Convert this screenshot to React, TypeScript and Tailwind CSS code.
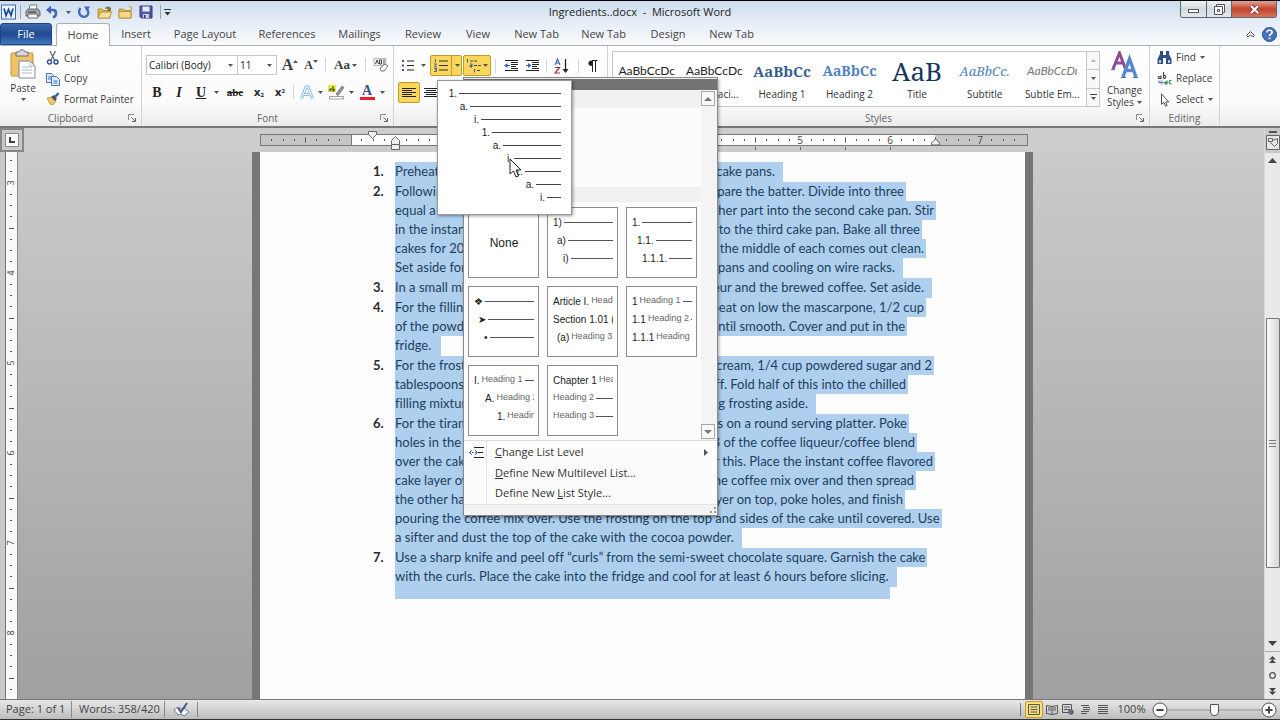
import type { ReactNode } from "react";

function Caret({ className = "" }: { className?: string }) {
  return (
    <svg className={`h-[3px] w-[5px] shrink-0 ${className}`} viewBox="0 0 5 3" fill="#555">
      <path d="M0 0h5L2.5 3z" />
    </svg>
  );
}

function Launcher() {
  return (
    <svg className="h-2 w-2" viewBox="0 0 8 8" fill="none" stroke="#8a8a8a">
      <path d="M.5 6V.5H6" />
      <path d="M3.5 3.5L7 7M7.5 4v3.5H4" stroke="#666" />
    </svg>
  );
}

/* ---------- title bar ---------- */

function Folder({ open }: { open?: boolean }) {
  return (
    <svg className="h-[15px] w-[16px]" viewBox="0 0 16 15">
      <path d="M1 13V4h4l1.5 1.500H13V13z" fill="#e3b64c" stroke="#a57d25" strokeWidth=".7" />
      {open ? (
        <>
          <path d="M1 13l3-6h11l-3 6z" fill="#fbe29a" stroke="#a57d25" strokeWidth=".7" />
          <path d="M8 4c1-3 4-3 5-1l1-1v4h-4l1.200-1.200C10.500 3.500 9 3.500 8 4z" fill="#6b7d36" />
        </>
      ) : (
        <path d="M1 13V6.500h12V13zM11 1l3 1.500-1 3" fill="#f8d888" stroke="#a57d25" strokeWidth=".7" />
      )}
    </svg>
  );
}

function TitleBar() {
  return (
    <header className="relative flex h-[23px] items-center justify-between border-t border-black">
      <div className="flex items-center pl-px">
        <svg className="h-4 w-[15px]" viewBox="0 0 15 16">
          <rect x=".5" y="1" width="14" height="14" fill="#eef5fc" stroke="#3a6fae" />
          <path d="M3 4.500l2 7 2.500-6 2.500 6 2-7" fill="none" stroke="#1d5298" strokeWidth="1.800" />
        </svg>
        <span className="mx-[4px] h-[14px] w-px bg-[#98a5b4]" />
        <button aria-label="Print" className="w-5">
          <svg className="h-4 w-4" viewBox="0 0 16 16">
            <path d="M4 6l1-5h7l-1 5" fill="#fff" stroke="#666" strokeWidth=".8" />
            <path d="M1 7l2-2h10l2 2v5H1z" fill="#a3a6aa" stroke="#50555c" strokeWidth=".8" />
            <path d="M3 10h9l1 4H3z" fill="#f5f5f5" stroke="#555" strokeWidth=".8" />
            <path d="M3 8h8" stroke="#333" />
          </svg>
        </button>
        <button aria-label="Undo" className="w-[19px]">
          <svg className="h-[14px] w-[14px]" viewBox="0 0 14 14" fill="none">
            <path d="M3 5h5c4 0 4 6 0 7.500" stroke="#3e63b8" strokeWidth="2.500" />
            <path d="M1 5l5-4.500V9z" fill="#3e63b8" />
          </svg>
        </button>
        <Caret className="ml-[2px] mr-[6px]" />
        <button aria-label="Repeat" className="w-5">
          <svg className="h-[14px] w-[14px]" viewBox="0 0 14 14" fill="none">
            <path d="M3.500 3C1 6 2 11.500 6.500 11.800 11 12 12.500 8 10.500 4.500" stroke="#3e6cc4" strokeWidth="2.300" />
            <path d="M7 1.500h6l-3 5z" fill="#3e6cc4" />
          </svg>
        </button>
        <button aria-label="Open" className="w-[21px]"><Folder open /></button>
        <button aria-label="New folder" className="w-[21px]"><Folder /></button>
        <button aria-label="Save" className="w-[18px]">
          <svg className="h-[14px] w-[14px]" viewBox="0 0 14 14">
            <path d="M1 1h12v12H2.500L1 11.500z" fill="#5557a8" stroke="#34367c" />
            <path d="M3.500 1.500h7v5h-7z" fill="#e8ebf7" />
            <path d="M4 9h6v4H4z" fill="#c9cce4" />
            <path d="M5 10h1.500v3H5z" fill="#34367c" />
          </svg>
        </button>
        <span className="mx-[3px] h-[14px] w-px bg-[#98a5b4]" />
        <svg className="h-2 w-[7px]" viewBox="0 0 7 8" fill="#333">
          <path d="M0 1h7v1H0zM.500 4h6l-3 3.500z" />
        </svg>
      </div>
      <h1 className="absolute inset-x-0 text-center text-[11px] text-[#222] pointer-events-none">
        Ingredients..docx&nbsp; - &nbsp;Microsoft Word
      </h1>
      <div className="mr-[3px] flex h-[17px] self-start overflow-hidden rounded-b-[3px] border border-t-0 border-[#5d6670]">
        <button aria-label="Minimize" className="flex w-[26px] items-end justify-center border-r border-[#5d6670] bg-linear-to-b from-[#f0f2f4] via-[#d3d8dd] via-50% to-[#e6eaee] pb-1">
          <svg className="h-[4px] w-[11px]" viewBox="0 0 11 4"><rect x=".5" y=".5" width="10" height="3" fill="#fff" stroke="#555" /></svg>
        </button>
        <button aria-label="Restore" className="flex w-[25px] items-center justify-center border-r border-[#5d6670] bg-linear-to-b from-[#f0f2f4] via-[#d3d8dd] via-50% to-[#e6eaee]">
          <svg className="h-[11px] w-[11px]" viewBox="0 0 11 11" fill="#fff" stroke="#555">
            <path d="M2.500.5h8v8h-8z" /><path d="M.5 2.500h8v8h-8z" /><path d="M3.500 5.500h2v2h-2z" />
          </svg>
        </button>
        <button aria-label="Close" className="flex w-[44px] items-center justify-center bg-linear-to-b from-[#e3a196] via-[#c0432c] via-50% to-[#d9745c]">
          <svg className="h-[9px] w-[11px]" viewBox="0 0 11 9" fill="none">
            <path d="M2 1l7 7M9 1L2 8" stroke="#6a4040" strokeWidth="3.500" />
            <path d="M2 1l7 7M9 1L2 8" stroke="#fff" strokeWidth="2" />
          </svg>
        </button>
      </div>
    </header>
  );
}

/* ---------- tabs ---------- */

const tabs = [
  { label: "Insert", w: "w-[52px]" },
  { label: "Page Layout", w: "w-[86px]" },
  { label: "References", w: "w-[78px]" },
  { label: "Mailings", w: "w-[67px]" },
  { label: "Review", w: "w-[60px]" },
  { label: "View", w: "w-[50px]" },
  { label: "New Tab", w: "w-[67px]" },
  { label: "New Tab", w: "w-[67px]" },
  { label: "Design", w: "w-[62px]" },
  { label: "New Tab", w: "w-[65px]" },
];

function Tabs() {
  return (
    <nav className="flex h-[22px] items-stretch text-[11px] text-[#444]">
      <button className="w-[52px] rounded-t-[3px] border border-[#1f4585] bg-linear-to-b from-[#3c69ad] via-[#20498f] via-50% to-[#3f76bd] text-white">File</button>
      <button className="relative z-10 -mb-px ml-1 w-[54px] rounded-t-[3px] border border-b-0 border-[#a9b1ba] bg-white">Home</button>
      {tabs.map((t, i) => (
        <button key={i} className={`${t.w} shrink-0 whitespace-nowrap`}>{t.label}</button>
      ))}
      <div className="ml-auto flex items-center gap-[7px] pr-[3px]">
        <svg className="h-[7px] w-[9px]" viewBox="0 0 9 7" fill="none" stroke="#555"><path d="M.5 4.500l4-4 4 4-1.500 1.500-2.500-2-2.500 2z" /></svg>
        <button aria-label="Help">
          <svg className="h-[15px] w-[15px]" viewBox="0 0 15 15">
            <circle cx="7.500" cy="7.500" r="7" fill="#4275bb" stroke="#27518f" />
            <path d="M5 5.500C5 2.500 10 2.500 10 5.500c0 1.600-2.500 1.600-2.500 3.500M7.500 10.500v1.800" fill="none" stroke="#fff" strokeWidth="1.700" />
          </svg>
        </button>
      </div>
    </nav>
  );
}

/* ---------- ribbon ---------- */

function Group({ label, className, launcher = true, children }: { label: string; className: string; launcher?: boolean; children: ReactNode }) {
  return (
    <section className={`flex shrink-0 flex-col border-r border-[#cfd2d6] ${className}`}>
      <div className="h-[65px]">{children}</div>
      <div className="relative flex h-4 items-center justify-center text-[10px] text-[#666]">
        {label}
        {launcher && <span className="absolute right-[5px]"><Launcher /></span>}
      </div>
    </section>
  );
}

function Clipboard() {
  return (
    <Group label="Clipboard" className="w-[142px]">
      <div className="flex">
        <button className="flex w-[46px] flex-col items-center pt-[3px]">
          <svg className="h-[30px] w-[27px]" viewBox="0 0 27 30">
            <rect x="1" y="4" width="22" height="23" rx="1" fill="#eec468" stroke="#c39336" />
            <path d="M6 3h3c0-3 6-3 6 0h3v4H6z" fill="#d6d9dd" stroke="#555" strokeWidth=".8" />
            <path d="M9 12h11l5 5v12H9z" fill="#fff" stroke="#7d8895" />
            <path d="M20 12v5h5M12 18h10M12 21h10M12 24h10" fill="none" stroke="#a9b8ca" />
          </svg>
          <span className="mt-[3px] text-[10px] leading-3">Paste</span>
          <Caret className="mt-1" />
        </button>
        <div className="flex flex-col pt-[2px] text-[10px]">
          <button className="flex h-[20px] items-center gap-1">
            <svg className="h-[14px] w-[14px]" viewBox="0 0 14 14" fill="none">
              <path d="M4 0l4.500 9M9.500 0L5 9" stroke="#5d6f8c" strokeWidth="1.300" />
              <circle cx="3.500" cy="11" r="2" stroke="#2e4f94" strokeWidth="1.400" />
              <circle cx="10" cy="11" r="2" stroke="#2e4f94" strokeWidth="1.400" />
            </svg>
            Cut
          </button>
          <button className="flex h-[21px] items-center gap-1">
            <svg className="h-[14px] w-[14px]" viewBox="0 0 14 14" stroke="#4c74ad">
              <path d="M.5 1.500h5l2 2v7h-7z" fill="#dceafb" /><path d="M2 5h4M2 7h4" />
              <path d="M5.500 4.500h5l3 3v6h-8z" fill="#dceafb" /><path d="M7.500 9h4M7.500 11h4" />
            </svg>
            Copy
          </button>
          <button className="flex h-[20px] items-center gap-1 whitespace-nowrap">
            <svg className="h-[14px] w-[14px]" viewBox="0 0 14 14">
              <path d="M1 6l5-1 4 4-3 4-3-1z" fill="#ecc764" stroke="#a57d25" strokeWidth=".6" />
              <path d="M5 5l3-2 3 4-2 2z" fill="#49505c" />
              <path d="M9 5l3.500-4" stroke="#3f65a8" strokeWidth="2.500" />
            </svg>
            Format Painter
          </button>
        </div>
      </div>
    </Group>
  );
}

const Sep = ({ className = "" }: { className?: string }) => <span className={`h-[14px] w-px bg-[#d3d6da] ${className}`} />;

function FontGroup() {
  return (
    <Group label="Font" className="w-[252px]">
      <div className="flex h-[20px] items-center pl-1 mt-[9px]">
        <label className="relative flex h-5 w-[92px] items-center border border-[#c4c8cd] bg-white">
          <select aria-label="Font" className="w-full appearance-none bg-transparent pl-[2px] text-[10px] text-[#222] outline-none"><option>Calibri (Body)</option></select>
          <Caret className="absolute right-1" />
        </label>
        <label className="relative -ml-px flex h-5 w-[40px] items-center border border-[#c4c8cd] bg-white">
          <select aria-label="Font size" className="w-full appearance-none bg-transparent pl-[2px] text-[10px] text-[#222] outline-none"><option>11</option></select>
          <Caret className="absolute right-1" />
        </label>
        <button className="ml-[3px] flex w-[20px] items-center justify-center font-['Liberation_Serif'] text-base font-bold leading-4" aria-label="Grow font">
          A<Caret className="-mt-2 rotate-180" />
        </button>
        <button className="flex w-[22px] items-center justify-center font-['Liberation_Serif'] text-xs font-bold leading-4" aria-label="Shrink font">
          A<Caret className="-mt-2" />
        </button>
        <Sep className="ml-[3px]" />
        <button className="flex w-[39px] items-center justify-center gap-[2px] font-['Liberation_Serif'] text-[13px] font-bold">Aa<Caret /></button>
        <Sep />
        <button aria-label="Clear formatting" className="ml-[7px]">
          <svg className="h-4 w-4" viewBox="0 0 16 16">
            <path d="M1 1.500h12v7H1z" fill="#f4f4f4" stroke="#999" strokeWidth=".7" />
            <path d="M2.500 7l1.500-4 1.500 4M6.500 3v4h2V3zM10 3h2M10 5h2M10 7h2" fill="none" stroke="#333" strokeWidth=".9" />
            <path d="M7 11l5-4 3 2-4 5H8z" fill="#f7f7f7" stroke="#777" />
          </svg>
        </button>
      </div>
      <div className="mt-[7px] flex h-5 items-center pl-1 font-['Liberation_Serif'] text-[14px] font-bold text-[#222]">
        <button className="w-[22px]">B</button>
        <button className="w-[22px] italic">I</button>
        <button className="w-[22px] underline">U</button>
        <Caret className="mx-[2px]" />
        <button className="w-[28px] text-[11px] line-through">abc</button>
        <button className="w-[20px] font-['Open_Sans'] text-[11px]">x<sub className="text-[6px]">2</sub></button>
        <button className="w-[22px] font-['Open_Sans'] text-[11px]">x<sup className="text-[6px]">2</sup></button>
        <Sep className="mx-[2px]" />
        <button aria-label="Text effects" className="flex w-[22px] justify-center">
          <svg className="h-[15px] w-[14px]" viewBox="0 0 14 15" fill="none">
            <path d="M1.500 13.500L6 2h2l4.500 11.500M4 9.500h6" stroke="#8fc0e4" strokeWidth="3" />
            <path d="M1.500 13.500L6 2h2l4.500 11.500M4 9.500h6" stroke="#fff" strokeWidth="1" />
          </svg>
        </button>
        <Caret className="mr-[2px]" />
        <button aria-label="Highlight" className="flex w-[22px] justify-center">
          <svg className="h-4 w-[17px]" viewBox="0 0 17 16">
            <path d="M0 1h8v7H0z" fill="#e4ec3c" />
            <path d="M1 6.500c0-1.500 2-1.500 2-.5M3 4v3.500M5 2v5.500M5 5c2-1 2 2.500 0 2" fill="none" stroke="#333" />
            <path d="M8 10l6-8 2 1.500-6 8z" fill="#8c95a3" stroke="#555" strokeWidth=".6" />
            <path d="M1.500 12.500h14v2.500h-14z" fill="#fff" stroke="#888" strokeWidth=".8" />
          </svg>
        </button>
        <Caret className="mx-[2px]" />
        <button aria-label="Font color" className="flex w-[22px] flex-col items-center font-['Liberation_Serif'] leading-3 text-[#3a5384]">
          A<span className="h-[3px] w-[15px] bg-[#e8202c]" />
        </button>
        <Caret className="ml-[2px]" />
      </div>
    </Group>
  );
}

function Lines({ center }: { center?: boolean }) {
  return (
    <svg className="h-3 w-[14px]" viewBox="0 0 14 12" stroke="#222" strokeWidth="1">
      <path d={center ? "M0 1.500h14M2 3.500h10M0 5.500h14M2 7.500h10M0 9.500h14" : "M0 1.500h14M0 3.500h10M0 5.500h14M0 7.500h10M0 9.500h14"} />
    </svg>
  );
}

function Indent({ flip }: { flip?: boolean }) {
  return (
    <svg className="h-[13px] w-[15px]" viewBox="0 0 15 13" fill="none">
      <path d="M1 1.500h13M7 3.500h7M7 5.500h7M7 7.500h5M7 9.500h7M1 11.500h13" stroke="#222" />
      <path d="M1 6.500h5" stroke="#3e63b8" />
      <path d={flip ? "M6.500 6.500L3 4v5z" : "M0 6.500L3.500 4v5z"} fill="#3e63b8" />
    </svg>
  );
}

function ParagraphGroup() {
  return (
    <section className="w-[214px] shrink-0 border-r border-[#cfd2d6] text-[#222]">
      <div className="mt-[9px] flex h-[21px] items-center">
        <button aria-label="Bullets" className="ml-2 flex w-[28px] shrink-0 items-center gap-[7px]">
          <svg className="h-[13px] w-3 shrink-0" viewBox="0 0 12 13" stroke="#222" fill="#3a5384">
            <path d="M5 2h7M5 6.500h7M5 11h7" /><path d="M0 1h2v2H0zM0 5.500h2v2H0zM0 10h2v2H0z" stroke="none" />
          </svg>
          <Caret />
        </button>
        <button aria-label="Numbering" className="flex h-[21px] w-8 items-center rounded-[2px] border border-[#c29b29] bg-[#fbd65c] pl-[3px]">
          <svg className="h-[13px] w-[14px]" viewBox="0 0 14 13" stroke="#333" fill="none">
            <path d="M5 2h9M5 6.500h9M5 11h9" /><path d="M1.500 0v3.500M0 5h2.500l-2 3h2.500M0 9.500h2.500v3H0M1 11h1.500" stroke="#3e5c9c" strokeWidth=".9" />
          </svg>
          <span className="mx-[3px] h-full w-px bg-[#c29b29]" />
          <Caret />
        </button>
        <button aria-label="Multilevel list" className="ml-px flex h-[21px] w-[28px] items-center gap-px rounded-[2px] border border-[#c29b29] bg-[#fbd65c] pl-[2px]">
          <svg className="h-[14px] w-[16px]" viewBox="0 0 16 14" stroke="#444" fill="none">
            <path d="M4 2h8M8 6.500h8M11 11.500h4" strokeDasharray="3 1" /><path d="M1.500 0v3.500M4 5h2v3H4V6.500h2M8.500 10v3.500" stroke="#3e5c9c" />
          </svg>
          <Caret />
        </button>
        <Sep className="ml-1" />
        <button aria-label="Decrease indent" className="ml-2"><Indent /></button>
        <button aria-label="Increase indent" className="ml-[6px]"><Indent flip /></button>
        <Sep className="ml-[6px]" />
        <button aria-label="Sort" className="ml-[7px]">
          <svg className="h-4 w-[16px]" viewBox="0 0 16 16" fill="none">
            <path d="M1 7l2.500-6L6 7M2 5h3" stroke="#3e63b8" strokeWidth="1.200" />
            <path d="M1 9.500h4.500L1 15h5" stroke="#9c3838" strokeWidth="1.200" />
            <path d="M11.500 1v12" stroke="#222" strokeWidth="1.300" /><path d="M8.500 11h6l-3 4z" fill="#222" />
          </svg>
        </button>
        <Sep className="ml-2" />
        <button aria-label="Show marks" className="ml-2 w-[14px]">
          <svg className="h-3 w-[11px]" viewBox="0 0 11 12" fill="none"><path d="M5 .500h5.500M5.500 1v11M8.500 1v11" stroke="#222" /><path d="M5.500.500C0 0 0 6.500 5.500 6z" fill="#222" /></svg>
        </button>
      </div>
      <div className="mt-[6px] flex items-center pl-1">
        <button aria-label="Align left" className="flex h-[21px] w-[22px] items-center justify-center rounded-[2px] border border-[#c29b29] bg-[#fbd65c]"><Lines /></button>
        <button aria-label="Center" className="ml-1"><Lines center /></button>
      </div>
    </section>
  );
}

const styleCells = [
  { sample: "AaBbCcDc", name: "Normal", cls: "font-['Lato'] text-[12px] text-[#222]" },
  { sample: "AaBbCcDc", name: "No Spaci...", cls: "font-['Lato'] text-[12px] text-[#222]" },
  { sample: "AaBbCc", name: "Heading 1", cls: "font-['Noto_Serif','DejaVu_Serif',serif] text-[15px] font-bold text-[#365f91]" },
  { sample: "AaBbCc", name: "Heading 2", cls: "font-['Noto_Serif','DejaVu_Serif',serif] text-[14px] font-bold text-[#4f81bd]" },
  { sample: "AaB", name: "Title", cls: "font-['Noto_Serif','DejaVu_Serif',serif] text-[26px] text-[#17365d]" },
  { sample: "AaBbCc.", name: "Subtitle", cls: "font-['Noto_Serif','DejaVu_Serif',serif] text-[13px] italic text-[#4f81bd]" },
  { sample: "AaBbCcDı", name: "Subtle Em...", cls: "font-['Lato'] text-[12px] italic text-[#777]" },
];

function StylesGroup() {
  return (
    <Group label="Styles" className="w-[542px]">
      <div className="flex pt-[5px] pl-1">
        <div className="flex h-[56px] w-[488px] border border-[#c4c8cd] bg-white">
          {styleCells.map((s) => (
            <button key={s.name} className="flex h-full min-w-0 flex-1 flex-col items-center px-1">
              <span className={`flex h-[34px] w-full items-center justify-center pt-1 leading-8 whitespace-nowrap ${s.cls}`}>{s.sample}</span>
              <span className="text-[10px] leading-4 whitespace-nowrap text-[#333]">{s.name}</span>
            </button>
          ))}
          <div className="flex w-[13px] flex-col divide-y divide-[#c4c8cd] border-l border-[#c4c8cd] bg-[#f7f8f9]">
            <button aria-label="Previous styles" className="flex flex-1 items-center justify-center"><Caret className="rotate-180 opacity-40" /></button>
            <button aria-label="Next styles" className="flex flex-1 items-center justify-center"><Caret /></button>
            <button aria-label="More styles" className="flex flex-1 flex-col items-center justify-center gap-[2px]"><span className="h-px w-[7px] bg-[#444]" /><Caret /></button>
          </div>
        </div>
        <button className="flex flex-1 flex-col items-center text-[10px] leading-3">
          <svg className="h-[28px] w-[28px]" viewBox="0 0 28 28" fill="none">
            <path d="M2 18L8.500 2l6 16M4.500 12h8" stroke="#8e4a94" strokeWidth="3" />
            <path d="M12 26l6.500-18L25 26M14.500 19.500h8" stroke="#5688cc" strokeWidth="3.400" />
            <path d="M10 26.500h5M22 26.500h5M0 18.500h4" stroke="#4573b5" />
          </svg>
          <span className="mt-[5px]">Change</span>
          <span className="flex items-center gap-[3px]">Styles<Caret /></span>
        </button>
      </div>
    </Group>
  );
}

function EditingGroup() {
  return (
    <Group label="Editing" launcher={false} className="w-[70px]">
      <div className="flex flex-col pt-px pl-[7px] text-[10px]">
        <button className="flex h-[21px] items-center gap-1">
          <svg className="h-[13px] w-[15px]" viewBox="0 0 15 13" fill="#2f4f87">
            <path d="M3 0h3v4h3V0h3v3l2.500 5v5H9V7H6v6H.500V8L3 3z" /><path d="M2 9h2v3H2zM11 9h2v3h-2z" fill="#b9cdea" />
          </svg>
          Find<Caret />
        </button>
        <button className="flex h-[21px] items-center gap-1">
          <svg className="h-[13px] w-[15px]" viewBox="0 0 15 13" fill="none">
            <path d="M4 3.500v3H2c-2-2 0-2 2-1.500M6.500 0v6.500M6.500 3.500c3-1 3 3 0 3" stroke="#444" strokeWidth="1.100" />
            <path d="M2 8.500v2h3M4 8.500l2 2-2 2" stroke="#3e63b8" />
            <path d="M10 8.500v3.500H8.500c-2-2 0-2 1.500-1.500M14.500 8.500c-3-1-3 3.500 0 3.500" stroke="#2d8a4c" strokeWidth="1.200" />
          </svg>
          Replace
        </button>
        <button className="flex h-[21px] items-center gap-1">
          <svg className="h-[14px] w-[15px]" viewBox="0 0 15 14" fill="#fff" stroke="#555"><path d="M4.500.800v10.500l2.500-2 1.500 4 1.700-.8-1.500-3.500h3z" /></svg>
          Select<Caret />
        </button>
      </div>
    </Group>
  );
}

/* ---------- rulers ---------- */

function HorizontalRuler() {
  const ticks = Array.from({ length: 67 }, (_, i) => i + 1);
  return (
    <svg className="mx-auto block h-6 w-[768px]" viewBox="0 0 768 24">
      <rect x=".5" y="6.500" width="767" height="11" fill="#c6c6c6" stroke="#777" />
      <rect x="91" y="7" width="584" height="10" fill="#fdfdfd" />
      <path d="M91.500 6v12" stroke="#777" />
      {ticks.map((i) => {
        const x = Math.round(i * 11.25);
        if (i % 8 === 0) {
          return <text key={i} x={x} y="16" fontSize="10" textAnchor="middle" fill="#444">{Math.abs(i / 8 - 1) || ""}</text>;
        }
        return <path key={i} d={i % 4 === 0 ? `M${x}.5 9.500v5` : `M${x}.5 11v2`} stroke="#555" />;
      })}
      {[495, 540, 585, 630].map((x) => <path key={x} d={`M${x}.5 19v3`} stroke="#666" />)}
      <path d="M108.500 3.500h8v3l-4 4-4-4z" fill="#f0f0f0" stroke="#666" />
      <path d="M131.500 16.500v-4l4-4 4 4v4zM131.500 16.500h8v5h-8z" fill="#f0f0f0" stroke="#666" />
      <path d="M671.500 17v-2l4-4 4 4v2z" fill="#f0f0f0" stroke="#666" />
    </svg>
  );
}

function VerticalRuler() {
  const ticks = Array.from({ length: 49 }, (_, i) => i + 1);
  return (
    <div className="w-[18px] shrink-0 overflow-hidden border-r border-[#888] bg-[#c9c9c9] pl-[5px]">
      <svg className="block h-[548px] w-[12px] bg-[#fafafa]" viewBox="0 0 12 548">
        <path d="M.5 0v548" stroke="#777" />
        {ticks.map((i) => {
          const y = Math.round(8 + (i - 1) * 11.25);
          const n = (i - 3) / 8;
          if (Number.isInteger(n)) {
            return <text key={i} x={6} y={y} fontSize="9" textAnchor="middle" fill="#444" transform={`rotate(-90 6 ${y}) translate(0 3)`}>{n + 3}</text>;
          }
          return <path key={i} d={(i - 3) % 4 === 0 ? `M4 ${y}.5h5` : `M5 ${y}.5h2`} stroke="#555" />;
        })}
      </svg>
    </div>
  );
}

function Scrollbar() {
  return (
    <div className="flex w-4 shrink-0 flex-col items-center border-l border-[#d8d8d8] bg-[#e9e9e9]">
      <div className="flex h-[25px] w-full flex-col items-center gap-[2px] bg-[#c9c9c9] pt-[3px]">
        <span className="h-[2px] w-2 bg-[#555]" />
        <svg className="h-[15px] w-[14px]" viewBox="0 0 14 15" fill="#e6e6e6" stroke="#666"><path d="M.5.500h13v14H.500z" /><path d="M2.500 3.500h4v3h-4zM6.500 5.500l5-2v5l-3 3-4-4z" /></svg>
      </div>
      <svg className="mt-[5px] h-[5px] w-[9px]" viewBox="0 0 9 5" fill="#444"><path d="M0 5h9L4.500 0z" /></svg>
      <div className="mt-[155px] flex h-[250px] w-[14px] items-center justify-center rounded-[1px] border border-[#777] bg-linear-to-r from-[#fbfbfb] to-[#d6d6d6]">
        <svg className="h-[7px] w-[7px]" viewBox="0 0 7 7" stroke="#777"><path d="M0 .500h7M0 3.500h7M0 6.500h7" /></svg>
      </div>
      <div className="mt-auto flex w-full flex-col items-center pb-1">
        <svg className="mb-[5px] h-[5px] w-[9px]" viewBox="0 0 9 5" fill="#444"><path d="M0 0h9L4.500 5z" /></svg>
        <span className="mb-1 h-px w-full bg-[#aaa]" />
        <svg className="h-[7px] w-[7px]" viewBox="0 0 7 7" fill="#444"><path d="M0 3.500h7L3.500 0zM0 7h7L3.500 3.500z" /></svg>
        <svg className="my-[9px] h-[7px] w-[7px]" viewBox="0 0 7 7" fill="none" stroke="#555"><circle cx="3.500" cy="3.500" r="2.800" strokeWidth="1.300" /></svg>
        <svg className="h-[7px] w-[7px]" viewBox="0 0 7 7" fill="#444"><path d="M0 0h7L3.500 3.500zM0 3.500h7L3.500 7z" /></svg>
      </div>
    </div>
  );
}

/* ---------- document ---------- */

type Line = { w: number; left: string; right?: string };
const steps: Line[][] = [
  [{ w: 388, left: "Preheat the oven", right: "cake pans." }],
  [
    { w: 511, left: "Following the", right: "pare the batter. Divide into three" },
    { w: 541, left: "equal a", right: "other part into the second cake pan. Stir" },
    { w: 527, left: "in the instant", right: "to the third cake pan. Bake all three" },
    { w: 531, left: "cakes for 20-", right: "the middle of each comes out clean." },
    { w: 508, left: "Set aside for", right: "pans and cooling on wire racks." },
  ],
  [{ w: 537, left: "In a small mix", right: "liqueur and the brewed coffee. Set aside." }],
  [
    { w: 531, left: "For the filling", right: "beat on low the mascarpone, 1/2 cup" },
    { w: 512, left: "of the powder", right: "until smooth. Cover and put in the" },
    { w: 46, left: "fridge." },
  ],
  [
    { w: 539, left: "For the frosti", right: "cream, 1/4 cup powdered sugar and 2" },
    { w: 513, left: "tablespoons", right: "stiff. Fold half of this into the chilled" },
    { w: 421, left: "filling mixture", right: "remaining frosting aside." },
  ],
  [
    { w: 514, left: "For the tiramis", right: "fingers on a round serving platter. Poke" },
    { w: 522, left: "holes in the", right: "1/3 of the coffee liqueur/coffee blend" },
    { w: 540, left: "over the cake", right: "over this. Place the instant coffee flavored" },
    { w: 521, left: "cake layer ov", right: "the coffee mix over and then spread" },
    { w: 510, left: "the other half", right: "layer on top, poke holes, and finish" },
    { w: 541, left: "pouring the coffee mix over. Use the frosting on the top and sides of the cake until covered. Use" },
    { w: 345, left: "a sifter and dust the top of the cake with the cocoa powder." },
  ],
  [
    { w: 529, left: "Use a sharp knife and peel off “curls” from the semi-sweet chocolate square. Garnish the cake" },
    { w: 495, left: "with the curls. Place the cake into the fridge and cool for at least 6 hours before slicing." },
  ],
];

function Page() {
  return (
    <article className="mx-auto w-[781px] border-x-8 border-x-[#777] bg-[#fdfdfd] pt-[10px] font-['Lato',sans-serif] text-[13px] text-[#1d3f5f] [font-variant-ligatures:none]">
      <ol className="pl-[113px]">
        {steps.map((lines, i) => (
          <li key={i} className="flex">
            <span className="w-[22px] shrink-0 leading-[19px] font-bold text-[#2a2a2a]">{i + 1}.</span>
            <div className="flex flex-col items-start">
              {lines.map((l, j) => {
                const end = j === lines.length - 1;
                return (
                  <p key={j} style={{ minWidth: l.w }} className={`flex justify-between bg-[#aecfee] leading-[19px] whitespace-nowrap last:h-5 ${end ? "pr-2" : "pr-[2px]"}`}>
                    <span>{l.left}</span>
                    {l.right && <span>{l.right}</span>}
                  </p>
                );
              })}
            </div>
          </li>
        ))}
      </ol>
      <p className="ml-[135px] h-3 w-[495px] bg-[#aecfee]" />
    </article>
  );
}

/* ---------- multilevel list menu ---------- */

type Row = { pad?: string; label: string; sub?: string; line?: boolean };
const thumbs: Row[][] = [
  [],
  [{ label: "1)", line: true }, { pad: "pl-1", label: "a)", line: true }, { pad: "pl-[10px]", label: "i)", line: true }],
  [{ label: "1.", line: true }, { pad: "pl-[5px]", label: "1.1.", line: true }, { pad: "pl-[10px]", label: "1.1.1.", line: true }],
  [{ label: "❖", line: true }, { pad: "pl-1", label: "➤", line: true }, { pad: "pl-[10px]", label: "•", line: true }],
  [{ label: "Article I.", sub: "Head" }, { label: "Section 1.01 (" }, { pad: "pl-1", label: "(a)", sub: "Heading 3", line: true }],
  [{ label: "1", sub: "Heading 1", line: true }, { label: "1.1", sub: "Heading 2", line: true }, { label: "1.1.1", sub: "Heading" }],
  [{ label: "I.", sub: "Heading 1", line: true }, { pad: "pl-[11px]", label: "A.", sub: "Heading 2" }, { pad: "pl-[23px]", label: "1.", sub: "Headin" }],
  [{ label: "Chapter 1", sub: "Hea" }, { label: "", sub: "Heading 2", line: true }, { label: "", sub: "Heading 3", line: true }],
];

function Thumb({ rows }: { rows: Row[] }) {
  return (
    <button className="flex h-[71px] w-[71px] flex-col border border-[#8c8c8c] bg-white pt-[5px] pr-1 pl-[5px] text-left font-['Liberation_Sans'] text-[10px] text-[#222]">
      {rows.length === 0 && <span className="m-auto pb-1 text-xs">None</span>}
      {rows.map((r, i) => (
        <span key={i} className={`flex h-[18px] w-full items-center gap-[2px] overflow-hidden whitespace-nowrap ${r.pad ?? ""}`}>
          {r.label && <span>{r.label}</span>}
          {r.sub && <span className="text-[9px] text-[#666]">{r.sub}</span>}
          {r.line && <span className="h-px min-w-0 flex-1 bg-[#555]" />}
        </span>
      ))}
    </button>
  );
}

function MultilevelMenu() {
  return (
    <div className="absolute top-[77px] left-[463px] w-[255px] border border-[#8a8a8a] bg-[#fcfcfc] shadow-[1px_2px_3px_rgba(0,0,0,0.35)]">
      <div className="h-3 border-t border-[#eee] bg-[#737373]" />
      <div className="flex h-[351px] border-b border-[#ddd]">
        <div className="flex-1">
          <div className="h-[18px] bg-[#f1f1f1]" />
          <div className="mt-[79px] h-[15px] bg-[#f1f1f1]" />
          <div className="grid grid-cols-[71px_71px_71px] gap-2 pt-[5px] pl-1">
            {thumbs.map((rows, i) => <Thumb key={i} rows={rows} />)}
          </div>
        </div>
        <div className="flex w-4 flex-col justify-between bg-[#f4f4f4] py-px">
          <button aria-label="Scroll up" className="flex h-[15px] w-[14px] items-center justify-center border border-[#aaa] bg-[#f7f7f7]">
            <svg className="h-1 w-2" viewBox="0 0 8 4" fill="#777"><path d="M0 4h8L4 0z" /></svg>
          </button>
          <button aria-label="Scroll down" className="flex h-[15px] w-[14px] items-center justify-center border border-[#aaa] bg-[#f7f7f7]">
            <svg className="h-1 w-2" viewBox="0 0 8 4" fill="#777"><path d="M0 0h8L4 4z" /></svg>
          </button>
        </div>
      </div>
      <div className="flex text-[11px] text-[#333]">
        <div className="w-[23px] border-r border-[#e2e2e2] pt-[5px] pl-[5px]">
          <svg className="h-[13px] w-[15px]" viewBox="0 0 15 13" fill="none">
            <path d="M5 1.500h10M9 6.500h5M5 11.500h10" stroke="#222" />
            <path d="M0 6.500h8" stroke="#4a6cb0" strokeDasharray="2 1" /><path d="M3 4L.5 6.500 3 9M6 4l2.500 2.500L6 9" stroke="#4a6cb0" />
          </svg>
        </div>
        <div className="flex flex-1 flex-col pt-px">
          <button className="flex h-[21px] items-center justify-between pr-[9px] pl-2">
            <span><u>C</u>hange List Level</span>
            <svg className="h-[7px] w-1" viewBox="0 0 4 7" fill="#555"><path d="M0 0v7l4-3.500z" /></svg>
          </button>
          <button className="h-[20px] pl-2 text-left"><u>D</u>efine New Multilevel List...</button>
          <button className="h-[21px] pl-2 text-left">Define New <u>L</u>ist Style...</button>
        </div>
      </div>
      <div className="flex h-[11px] items-end justify-end border-t border-[#e2e2e2] bg-[#f3f3f3] p-px">
        <svg className="h-[7px] w-[7px]" viewBox="0 0 7 7" fill="#999"><path d="M5 0h2v2H5zM5 4h2v2H5zM1 4h2v2H1z" /></svg>
      </div>
    </div>
  );
}

function ListPreview() {
  return (
    <div className="absolute top-[80px] left-[437px] w-[135px] border border-[#9a9a9a] bg-white pt-[6px] pr-[10px] pb-[10px] font-['Liberation_Sans'] text-[10px] text-[#222] shadow-[1px_1px_3px_rgba(0,0,0,0.4)]">
      {["1.", "a.", "i.", "1.", "a.", "i.", "1.", "a.", "i."].map((m, i) => (
        <div key={i} style={{ paddingLeft: i * 11 }} className="flex h-[13px] items-center gap-[2px]">
          <span className="w-[19px] text-right">{m}</span>
          <span className="h-px flex-1 bg-[#444]" />
        </div>
      ))}
      <svg className="absolute top-[77px] left-[71px] h-[21px] w-[14px]" viewBox="0 0 14 21" fill="#fff" stroke="#222">
        <path d="M1 1v15l3.500-3 2.500 6 2.500-1-2.500-6H12z" />
      </svg>
    </div>
  );
}

/* ---------- status bar ---------- */

function ViewIcon({ d }: { d: string }) {
  return <svg className="h-[11px] w-[12px]" viewBox="0 0 12 11" fill="none" stroke="#555"><path d={d} /></svg>;
}

function StatusBar() {
  return (
    <footer className="flex h-[21px] shrink-0 items-center border-t border-b border-t-[#777] border-b-[#333] bg-linear-to-b from-[#e8e8e8] to-[#bdbdbd] text-[11px] text-[#444]">
      <span className="w-[72px] border-r border-[#888] pl-[6px] whitespace-nowrap">Page: 1 of 1</span>
      <span className="w-[93px] border-r border-[#888] pl-[7px] whitespace-nowrap">Words: 358/420</span>
      <button aria-label="Proofing" className="flex w-[33px] justify-center border-r border-[#888]">
        <svg className="h-[15px] w-[17px]" viewBox="0 0 17 15">
          <path d="M1 8l4-3 3 2 3-1 5 4-5 4-3-2-3 1z" fill="#f5f7fb" stroke="#6f7c94" />
          <path d="M5 6l3 4 6-9" fill="none" stroke="#43598f" strokeWidth="2" />
        </svg>
      </button>
      <div className="ml-auto flex items-center">
        <span className="mr-1 h-[13px] w-px bg-[#777]" />
        <button aria-label="Print layout" className="flex h-[17px] w-[18px] items-center justify-center rounded-[2px] border border-[#c29b29] bg-[#fbe07a]"><ViewIcon d="M.5.500h11v10H.500zM2.500 3h7M2.500 5.500h7M2.500 8h7" /></button>
        <button aria-label="Full screen reading" className="flex w-[17px] justify-center"><ViewIcon d="M6 2v8M.5 1.500L6 2.500l5.500-1v8L6 10.500.5 9.500zM2 4h3M7 4h3M2 6h3M7 6h3" /></button>
        <button aria-label="Web layout" className="flex w-4 justify-center">
          <svg className="h-[11px] w-[12px]" viewBox="0 0 12 11" fill="none" stroke="#555"><path d="M.5.500h9v8h-9zM2 3h6M2 5.500h6" /><circle cx="9" cy="8" r="2.300" fill="#4a7ba5" /></svg>
        </button>
        <button aria-label="Outline" className="flex w-[18px] justify-center"><ViewIcon d="M2 1.500h8M4 3.500h7M4 5.500h7M2 7.500h8M2 9.500h6" /></button>
        <button aria-label="Draft" className="flex w-[17px] justify-center"><ViewIcon d="M1 1.500h10M1 3.500h10M1 5.500h10M1 7.500h10M1 9.500h10" /></button>
        <span className="w-[41px] text-center">100%</span>
        <button aria-label="Zoom out">
          <svg className="h-4 w-4" viewBox="0 0 16 16"><circle cx="8" cy="8" r="7" fill="#fafafa" stroke="#555" /><path d="M4.500 8h7" stroke="#444" strokeWidth="2" /></svg>
        </button>
        <input
          type="range"
          aria-label="Zoom"
          defaultValue={50}
          className="h-[14px] w-[93px] appearance-none bg-linear-to-b from-transparent from-45% via-[#666] via-50% to-transparent to-55% [&::-webkit-slider-thumb]:h-3 [&::-webkit-slider-thumb]:w-[9px] [&::-webkit-slider-thumb]:appearance-none [&::-webkit-slider-thumb]:rounded-b-[4px] [&::-webkit-slider-thumb]:border [&::-webkit-slider-thumb]:border-[#555] [&::-webkit-slider-thumb]:bg-[#fafafa]"
        />
        <button aria-label="Zoom in" className="mr-[3px]">
          <svg className="h-4 w-4" viewBox="0 0 16 16"><circle cx="8" cy="8" r="7" fill="#fafafa" stroke="#555" /><path d="M4.500 8h7M8 4.500v7" stroke="#444" strokeWidth="2" /></svg>
        </button>
      </div>
    </footer>
  );
}

export default function App() {
  return (
    <div className="relative flex h-screen flex-col overflow-hidden bg-[#b8b8b8] font-['Open_Sans','Noto_Sans',sans-serif] text-[#3c3c3c]">
      <div className="shrink-0 bg-linear-to-b from-[#cbdced] via-[#e1eaf4] via-40% to-[#fafbfd]">
        <TitleBar />
        <Tabs />
      </div>
      <div className="flex h-[83px] shrink-0 border-t border-b-2 border-t-[#a9b1ba] border-b-[#777] bg-linear-to-b from-white via-[#fbfbfc] via-70% to-[#ececee]">
        <Clipboard />
        <FontGroup />
        <ParagraphGroup />
        <StylesGroup />
        <EditingGroup />
      </div>
      <main className="flex min-h-0 flex-1 bg-linear-to-b from-[#cdcdcd] to-[#a0a0a0]">
        <div className="flex min-w-0 flex-1 flex-col">
          <div className="flex h-6 shrink-0">
            <div className="flex h-6 w-6 shrink-0 items-center justify-center border-2 border-[#888] bg-[#c9c9c9]">
              <span className="flex h-[14px] w-[14px] items-center justify-center border border-[#888] bg-[#fafafa]">
                <span className="h-[6px] w-[6px] border-b-2 border-l-2 border-[#444]" />
              </span>
            </div>
            <div className="flex-1 pr-px"><HorizontalRuler /></div>
          </div>
          <div className="flex min-h-0 flex-1 overflow-hidden">
            <VerticalRuler />
            <div className="flex flex-1 pl-[3px]"><Page /></div>
          </div>
        </div>
        <Scrollbar />
      </main>
      <StatusBar />
      <MultilevelMenu />
      <ListPreview />
    </div>
  );
}
